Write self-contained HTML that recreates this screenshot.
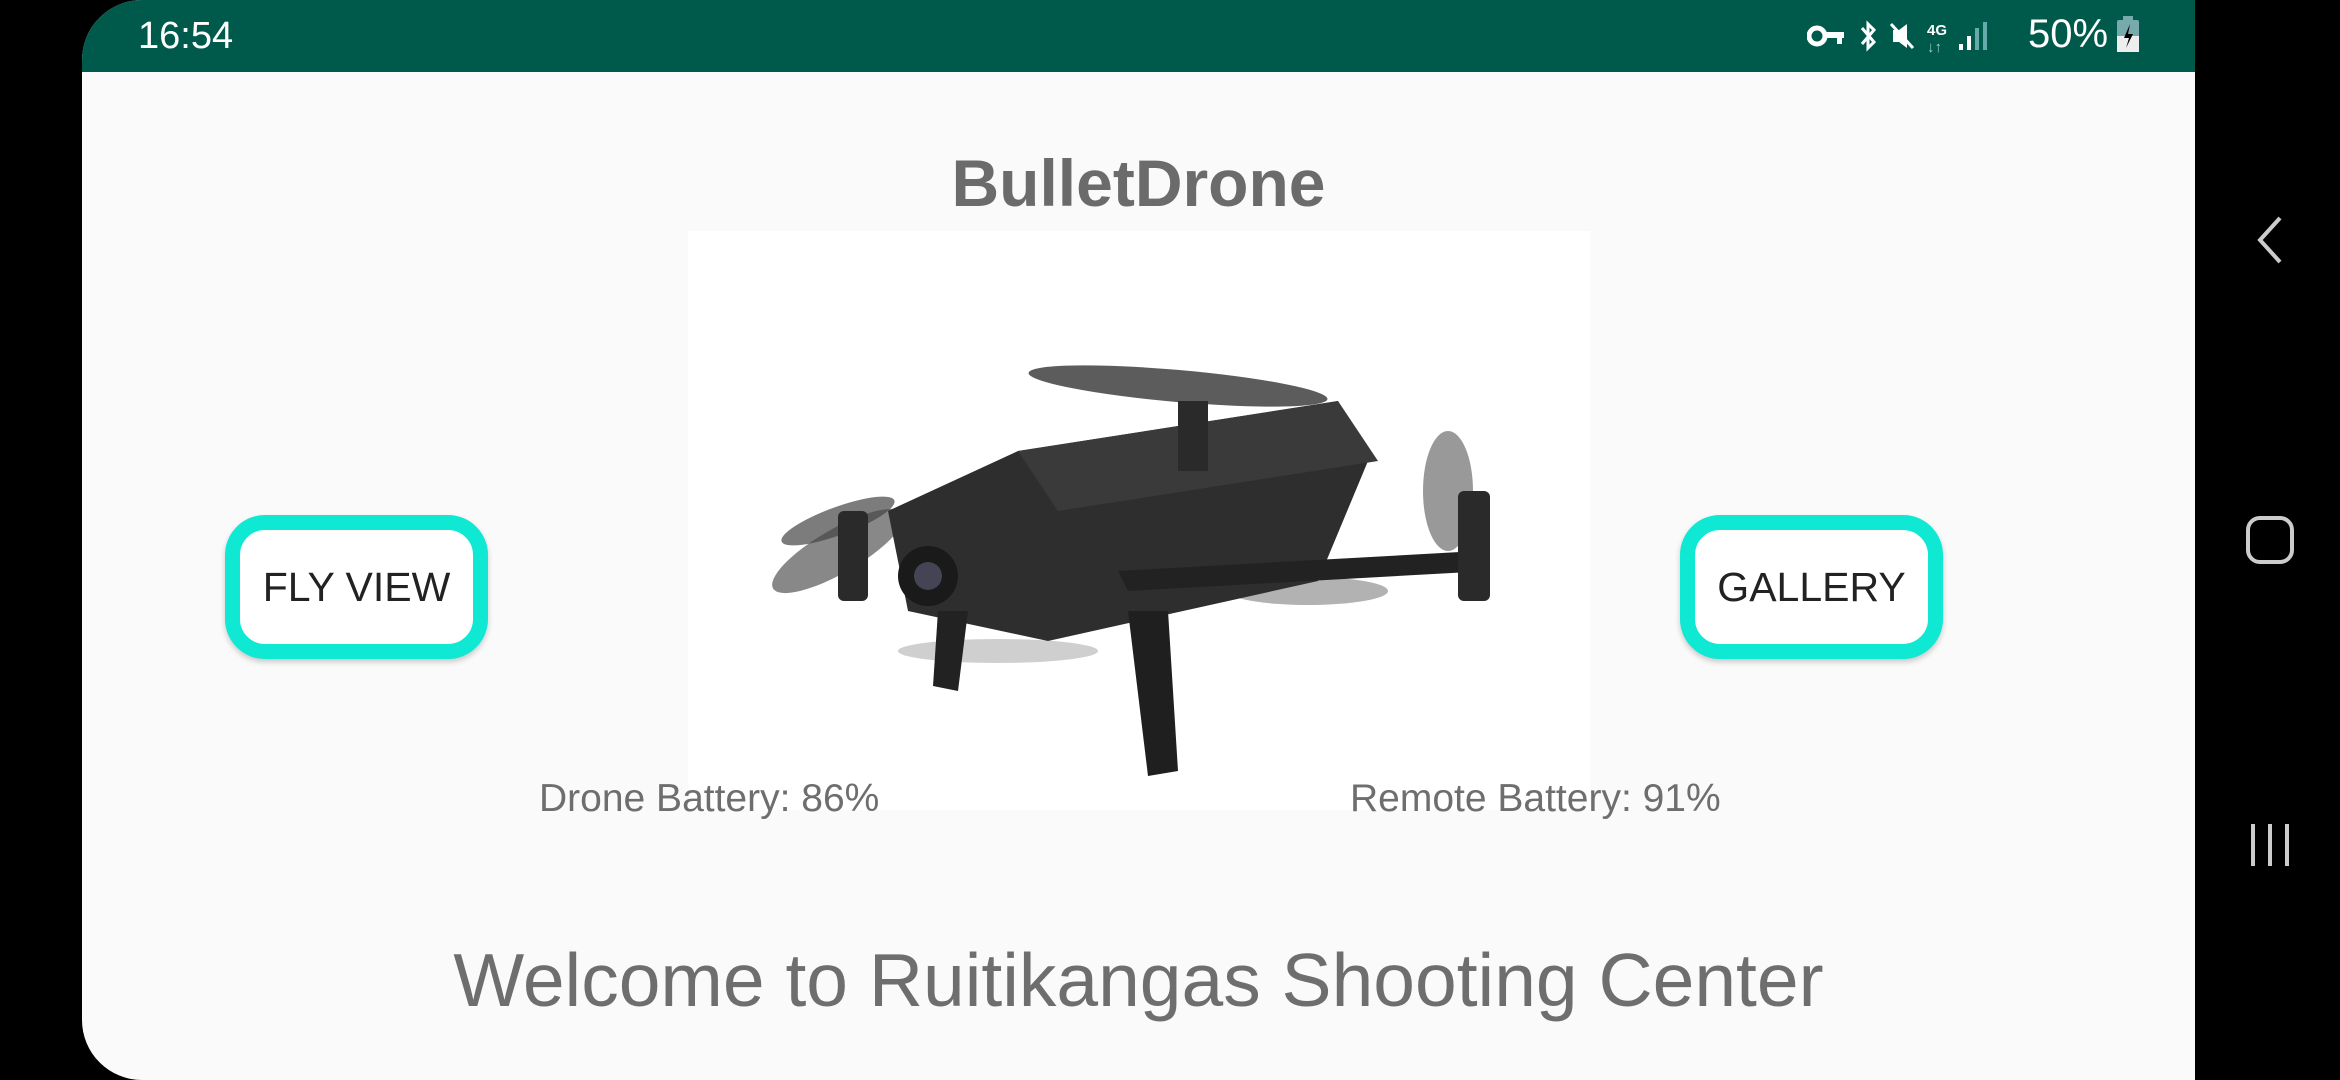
<!DOCTYPE html>
<html><head><meta charset="utf-8"><style>
html,body{margin:0;padding:0;width:2340px;height:1080px;background:#000;overflow:hidden;font-family:"Liberation Sans",Roboto,sans-serif}
#app{position:absolute;left:82px;top:0;width:2113px;height:1080px;background:#fafafa;border-radius:60px 0 0 60px;overflow:hidden}
#sb{position:absolute;left:0;top:0;width:100%;height:72px;background:#005a4c;color:#fff}
#time{position:absolute;left:56px;top:15px;font-size:38px}
#pct{position:absolute;left:1946px;top:12px;font-size:40px}
.title{position:absolute;left:0;width:100%;text-align:center;top:145px;font-size:66px;font-weight:bold;color:#6b6b6b}
#img{position:absolute;left:606px;top:231px;width:902px;height:579px;background:#fff}
.btn{position:absolute;top:515px;width:233px;height:114px;border:15px solid #0fe8d2;border-radius:40px;background:#fff;font-size:41px;color:#222;display:flex;align-items:center;justify-content:center;box-shadow:0 3px 6px rgba(0,0,0,.2)}
.bat{position:absolute;top:777px;font-size:39px;color:#6e6e6e}
.wel{position:absolute;left:0;width:100%;text-align:center;top:937px;font-size:75px;color:#6e6e6e}
</style></head><body>
<div id="app">
<div id="sb"><div id="time">16:54</div>
<svg style="position:absolute;left:1725px;top:18px" width="210" height="36" viewBox="0 0 210 36" fill="#fff">
<circle cx="10" cy="18" r="8" fill="none" stroke="#fff" stroke-width="5"/><rect x="17" y="14" width="20" height="6"/><rect x="30" y="18" width="5" height="8"/>
<path d="M55 10l12 14-6 6V6l6 6-12 14" fill="none" stroke="#fff" stroke-width="3"/>
<path d="M86 12h6l8-6v24l-8-6h-6z"/><path d="M84 6l22 24" stroke="#fff" stroke-width="3"/>
<text x="120" y="17" font-size="15" font-weight="bold" fill="#fff" font-family="Liberation Sans">4G</text>
<text x="120" y="34" font-size="15" fill="#9cc" font-family="Liberation Sans">↓↑</text>
<rect x="152" y="26" width="4" height="6"/><rect x="160" y="18" width="4" height="14"/><rect x="168" y="10" width="4" height="22" fill="#6aa"/><rect x="176" y="4" width="4" height="28" fill="#6aa"/>
</svg>
<div id="pct">50%</div>
<svg style="position:absolute;left:2035px;top:16px" width="22" height="36"><rect x="6" y="0" width="10" height="4" fill="#7aa"/><rect x="0" y="4" width="22" height="32" rx="2" fill="#7aa"/><rect x="0" y="20" width="22" height="16" fill="#eee"/><path d="M13 8l-6 14h5l-3 10 7-14h-5z" fill="#000"/></svg>
</div>
<div class="title">BulletDrone</div>
<div id="img"><svg width="902" height="579" viewBox="0 0 902 579">
<ellipse cx="150" cy="320" rx="75" ry="22" fill="#555" opacity=".7" transform="rotate(-30 150 320)"/>
<ellipse cx="150" cy="290" rx="60" ry="14" fill="#444" opacity=".7" transform="rotate(-20 150 290)"/>
<ellipse cx="490" cy="155" rx="150" ry="16" fill="#333" opacity=".8" transform="rotate(5 490 155)"/>
<ellipse cx="760" cy="260" rx="25" ry="60" fill="#555" opacity=".6"/>
<ellipse cx="620" cy="360" rx="80" ry="14" fill="#666" opacity=".5"/>
<ellipse cx="310" cy="420" rx="100" ry="12" fill="#888" opacity=".4"/>
<path d="M200 280 L330 220 L650 170 L680 230 L630 350 L360 410 L220 380 Z" fill="#2e2e2e"/>
<path d="M330 220 L650 170 L690 230 L370 280 Z" fill="#3a3a3a"/>
<path d="M430 340 L790 320 L800 340 L440 360 Z" fill="#222"/>
<rect x="770" y="260" width="32" height="110" rx="6" fill="#2a2a2a"/>
<rect x="150" y="280" width="30" height="90" rx="6" fill="#2a2a2a"/>
<rect x="490" y="170" width="30" height="70" fill="#2a2a2a"/>
<circle cx="240" cy="345" r="30" fill="#1a1a1a"/><circle cx="240" cy="345" r="14" fill="#445"/>
<path d="M440 380 L480 380 L490 540 L460 545 Z" fill="#1f1f1f"/>
<path d="M250 380 L280 380 L270 460 L245 455 Z" fill="#222"/>
</svg></div>
<div class="btn" style="left:143px">FLY VIEW</div>
<div class="btn" style="left:1598px">GALLERY</div>
<div class="bat" style="left:457px">Drone Battery: 86%</div>
<div class="bat" style="left:1268px">Remote Battery: 91%</div>
<div class="wel">Welcome to Ruitikangas Shooting Center</div>
</div>
<svg style="position:absolute;left:2250px;top:210px" width="40" height="60"><path d="M30 8 L10 30 L30 52" fill="none" stroke="#ccc" stroke-width="4"/></svg>
<svg style="position:absolute;left:2245px;top:515px" width="50" height="50"><rect x="3" y="3" width="44" height="44" rx="12" fill="none" stroke="#ccc" stroke-width="4"/></svg>
<svg style="position:absolute;left:2245px;top:820px" width="50" height="50"><path d="M8 4v42M25 4v42M42 4v42" stroke="#ccc" stroke-width="4"/></svg>
</body></html>
